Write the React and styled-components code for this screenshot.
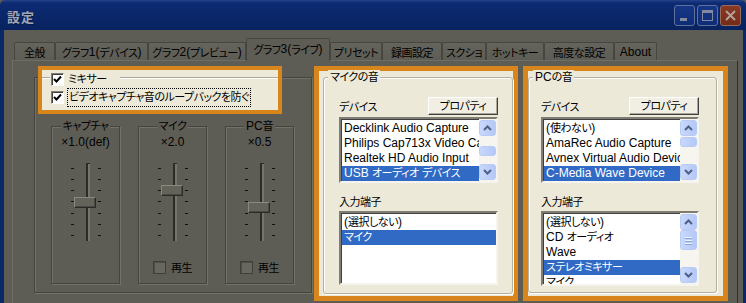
import styled, { createGlobalStyle } from "styled-components";

const GlobalStyle = createGlobalStyle`
  html, body {
    margin: 0;
    background: #5e5d55;
  }
  body {
    font-family: "Liberation Sans", "Noto Sans CJK JP", sans-serif;
    font-size: 12px;
    font-feature-settings: "palt";
    color: #000;
  }
`;

// Japanese runs are narrower in the original UI font
const Ja = styled.span`
  font-size: 11px;
  letter-spacing: -0.5px;
`;

const T = ({ children }) =>
  children
    .split(/([\u3000-\u30ff\u3400-\u9fff\uff00-\uffef]+)/)
    .map((part, i) => (i % 2 ? <Ja key={i}>{part}</Ja> : part));

const Window = styled.div`
  width: 746px;
  height: 303px;
  overflow: hidden;
  display: flex;
  flex-direction: column;
`;

const TitleBar = styled.div`
  height: 30px;
  flex: none;
  display: flex;
  align-items: flex-start;
  justify-content: space-between;
  padding: 0 5px 0 7px;
  box-sizing: border-box;
  border-radius: 5px 5px 0 0;
  background: linear-gradient(#23428a 0, #0d2b72 3px, #0a276b 50%, #08235f 100%);
`;

const TitleText = styled.div`
  margin-top: 7px;
  font-size: 13px;
  font-weight: bold;
  letter-spacing: 1px;
  color: #a3a7b3;
  text-shadow: 1px 1px 0 #061a4a;
`;

const CaptionButtons = styled.div`
  display: flex;
  gap: 2px;
  margin-top: 5px;
`;

const CaptionButton = styled.div`
  width: 21px;
  height: 21px;
  box-sizing: border-box;
  border: 1px solid ${(p) => (p.$close ? "#9a6a5a" : "#60719d")};
  border-radius: 3px;
  background: ${(p) =>
    p.$close
      ? "linear-gradient(#873a24, #742c18)"
      : "linear-gradient(#163788, #0e2c76)"};
  display: flex;
  align-items: center;
  justify-content: center;
`;

const Body = styled.div`
  flex: 1;
  min-height: 0;
  display: flex;
  flex-direction: column;
  background: #5e5d55;
  border-left: 4px solid #0a2768;
  border-right: 3px solid #0a2768;
  padding: 8px 5px 0 8px;
`;

const TabRow = styled.div`
  display: flex;
  align-items: flex-end;
  height: 22px;
  padding-left: 2px;
  position: relative;
  z-index: 1;
  flex: none;
`;

const Tab = styled.div`
  width: ${(p) => p.$w}px;
  height: ${(p) => (p.$active ? 23 : 18)}px;
  margin-bottom: ${(p) => (p.$active ? -1 : 0)}px;
  box-sizing: border-box;
  border: 1px solid #46453f;
  border-bottom: none;
  border-radius: 2px 2px 0 0;
  background: ${(p) =>
    p.$active ? "#5e5d55" : "linear-gradient(#64635c, #5d5c55)"};
  display: flex;
  align-items: center;
  justify-content: center;
  padding-bottom: ${(p) => (p.$active ? 2 : 0)}px;
  white-space: nowrap;
  flex: none;
`;

const Panel = styled.div`
  height: 260px;
  flex: none;
  box-sizing: border-box;
  border: 1px solid;
  border-color: #6e6d66 #2f2e2b #2f2e2b #6e6d66;
  display: flex;
  align-items: flex-start;
  padding: 5px 0 0 21px;
`;

const MixerGroup = styled.div`
  position: relative;
  margin-top: 11px;
  width: 278px;
  height: 216px;
  flex: none;
  box-sizing: border-box;
  border: 1px solid #45443e;
  box-shadow: 1px 1px 0 #73726a, inset 1px 1px 0 #73726a;
  display: flex;
  gap: 18px;
  padding: 48px 0 0 16px;
`;

const SubGroup = styled.div`
  width: 69px;
  height: 158px;
  flex: none;
  box-sizing: border-box;
  border: 1px solid #45443e;
  box-shadow: 1px 1px 0 #73726a, inset 1px 1px 0 #73726a;
  display: flex;
  flex-direction: column;
  align-items: center;
`;

const SubLegend = styled.div`
  margin-top: -7px;
  line-height: 13px;
  padding: 0 2px;
  background: #5e5d55;
`;

const SubValue = styled.div`
  margin-top: 2px;
  line-height: 14px;
`;

const Slider = styled.div`
  position: relative;
  margin-top: 14px;
  height: 78px;
  width: 30px;
  display: flex;
  justify-content: space-between;
`;

const TickCol = styled.div`
  margin-top: 5px;
  height: 68px;
  width: 4px;
  display: flex;
  flex-direction: column;
  justify-content: space-between;
  align-items: ${(p) => (p.$right ? "flex-end" : "flex-start")};
`;

const Tick = styled.div`
  width: 3px;
  height: 1px;
  background: #111;
`;

const Track = styled.div`
  width: 4px;
  height: 78px;
  margin-left: 4px;
  box-sizing: border-box;
  border-left: 2px solid #2c2b27;
  border-top: 1px solid #2c2b27;
  background: #76756d;
`;

const Thumb = styled.div`
  position: absolute;
  left: 3px;
  width: 22px;
  height: 11px;
  box-sizing: border-box;
  background: #646359;
  border: 1px solid;
  border-color: #8a897f #2b2a26 #2b2a26 #8a897f;
  box-shadow: inset -1px -1px 0 #4a4943;
`;

const PlayRow = styled.div`
  margin-top: 18px;
  height: 16px;
  display: flex;
  align-items: center;
  gap: 5px;
`;

const DimCheck = styled.div`
  width: 13px;
  height: 13px;
  box-sizing: border-box;
  border: 1px solid #3f3e39;
  background: #67665f;
  box-shadow: inset 1px 1px 0 #4e4d47;
`;

const Highlight = styled.div`
  position: absolute;
  left: 3px;
  top: -12px;
  width: 244px;
  height: 48px;
  box-sizing: border-box;
  border: 4px solid #d8861b;
  background: #ece9d8;
  padding-top: 3px;
`;

const HLRow = styled.div`
  display: flex;
  align-items: center;
  height: 13px;
  margin-top: ${(p) => (p.$second ? 5 : 0)}px;
  padding-left: ${(p) => (p.$second ? 9 : 0)}px;
`;

const GroupLine = styled.div`
  align-self: flex-start;
  margin-top: 4px;
  width: ${(p) => (p.$w ? `${p.$w}px` : "auto")};
  flex: ${(p) => (p.$w ? "none" : 1)};
  height: 0;
  border-top: 1px solid #aca899;
  border-bottom: 1px solid #fff;
`;

const CheckBox = styled.div`
  width: 13px;
  height: 13px;
  flex: none;
  box-sizing: border-box;
  margin-left: ${(p) => p.$ml || 0}px;
  border: 1px solid;
  border-color: #7f7d73 #fff #fff #7f7d73;
  box-shadow: inset 1px 1px 0 #404040;
  background: #fff;
  display: flex;
  align-items: center;
  justify-content: center;
`;

const CheckLabel = styled.div`
  width: 52px;
  padding-left: 4px;
  line-height: 13px;
  white-space: nowrap;
`;

const FocusLabel = styled.div`
  margin-left: 3px;
  border: 1px dotted #000;
  padding: 1px 1px;
  line-height: 15px;
  white-space: nowrap;
`;

const AudioPanel = styled.div`
  width: ${(p) => p.$w}px;
  height: 235px;
  margin-left: ${(p) => p.$ml}px;
  flex: none;
  box-sizing: border-box;
  border: 5px solid #d8861b;
  background: #ece9d8;
  padding: 6px 0 0 ${(p) => p.$pl}px;
`;

const AudioGroup = styled.div`
  width: ${(p) => p.$w}px;
  height: ${(p) => p.$h}px;
  box-sizing: border-box;
  border: 1px solid #b3b0a2;
  border-radius: 3px;
  box-shadow: inset 1px 1px 0 #fff, 1px 1px 0 #fff;
  display: flex;
  flex-direction: column;
`;

const Legend = styled.div`
  align-self: flex-start;
  margin: -8px 0 0 4px;
  padding: 0 2px;
  line-height: 14px;
  background: #ece9d8;
`;

const GroupContent = styled.div`
  display: flex;
  flex-direction: column;
  padding: 0 ${(p) => p.$pr}px 0 ${(p) => p.$pl}px;
`;

const DeviceRow = styled.div`
  margin-top: 13px;
  height: 18px;
  display: flex;
  align-items: center;
  justify-content: space-between;
`;

const PropButton = styled.div`
  width: 70px;
  height: 18px;
  box-sizing: border-box;
  border: 1px solid;
  border-color: #fff #404040 #404040 #fff;
  box-shadow: inset -1px -1px 0 #aca899;
  background: #f1efe4;
  display: flex;
  align-items: center;
  justify-content: center;
  line-height: 1;
`;

const FieldLabel = styled.div`
  margin-top: 11px;
  line-height: 16px;
`;

const ListBox = styled.div`
  margin-top: ${(p) => p.$mt}px;
  height: ${(p) => p.$h}px;
  box-sizing: border-box;
  border: 2px solid;
  border-color: #7f7d73 #f5f4ee #f5f4ee #7f7d73;
  box-shadow: inset 1px 1px 0 #404040;
  background: #fff;
  display: flex;
  overflow: hidden;
`;

const Items = styled.div`
  flex: 1;
  min-width: 0;
  padding: 2px 0 0 1px;
  overflow: hidden;
`;

const Item = styled.div`
  height: 15px;
  line-height: 15px;
  padding-left: 2px;
  white-space: nowrap;
  overflow: hidden;
  background: ${(p) => (p.$selected ? "#316ac5" : "transparent")};
  color: ${(p) => (p.$selected ? "#fff" : "#000")};
`;

const ScrollBar = styled.div`
  width: 17px;
  flex: none;
  display: flex;
  flex-direction: column;
  background: #f6f5f0;
  padding: 1px 0;
  box-sizing: border-box;
`;

const ScrollPart = styled.div`
  height: ${(p) => p.$h}px;
  flex: none;
  box-sizing: border-box;
  border: 1px solid #b8cbf7;
  border-radius: 3px;
  background: linear-gradient(90deg, #c9d8fc, #b4c8f6);
  display: flex;
  flex-direction: column;
  align-items: center;
  justify-content: center;
  gap: 2px;
`;

const ScrollTrack = styled.div`
  flex: 1;
  position: relative;
`;

const ScrollThumb = styled(ScrollPart)`
  position: absolute;
  left: 0;
  right: 0;
`;

const Grip = styled.div`
  width: 7px;
  height: 1px;
  background: #eef3ff;
  box-shadow: 0 1px 0 #8ca3d8;
`;

const Check = () => (
  <svg width="9" height="9" viewBox="0 0 9 9">
    <polyline points="1,4 3.5,6.5 8,1.5" fill="none" stroke="#000" strokeWidth="2" />
  </svg>
);

const Arrow = ({ down }) => (
  <svg width="11" height="8" viewBox="0 0 11 8">
    <polyline
      points={down ? "2,2 5.5,5.5 9,2" : "2,6 5.5,2.5 9,6"}
      fill="none"
      stroke="#4d6185"
      strokeWidth="2"
    />
  </svg>
);

const tabs = [
  ["全般", 41],
  ["グラフ 1(デバイス)", 93],
  ["グラフ 2(プレビュー)", 98],
  ["グラフ 3(ライブ)", 84, true],
  ["プリセット", 52],
  ["録画設定", 60],
  ["スクショ", 44],
  ["ホットキー", 58],
  ["高度な設定", 70],
  ["About", 43],
];

const channels = [
  { name: "キャプチャ", value: "×1.0(def)", pos: 34, play: false },
  { name: "マイク", value: "×2.0", pos: 22, play: true },
  { name: "PC音", value: "×0.5", pos: 39, play: true },
];

const ticks = [0, 1, 2, 3, 4, 5, 6];

function Scroll({ thumbTop, thumbH }) {
  return (
    <ScrollBar>
      <ScrollPart $h={16}>
        <Arrow />
      </ScrollPart>
      <ScrollTrack>
        <ScrollThumb $h={thumbH} style={{ top: thumbTop }}>
          {thumbH > 15 && (
            <>
              <Grip />
              <Grip />
              <Grip />
            </>
          )}
        </ScrollThumb>
      </ScrollTrack>
      <ScrollPart $h={16}>
        <Arrow down />
      </ScrollPart>
    </ScrollBar>
  );
}

function List({ items, selected, h, mt, scroll }) {
  return (
    <ListBox $h={h} $mt={mt}>
      <Items>
        {items.map((it, i) => (
          <Item key={i} $selected={i === selected}>
            <T>{it}</T>
          </Item>
        ))}
      </Items>
      {scroll && <Scroll {...scroll} />}
    </ListBox>
  );
}

function SoundPanel({ title, w, ml, pl, gw, gh, pad, devices, devSel, devScroll, inputs, inSel, inH, inScroll }) {
  return (
    <AudioPanel $w={w} $ml={ml} $pl={pl}>
      <AudioGroup $w={gw} $h={gh}>
        <Legend>
          <T>{title}</T>
        </Legend>
        <GroupContent $pl={pad[0]} $pr={pad[1]}>
          <DeviceRow>
            <span>
              <T>デバイス</T>
            </span>
            <PropButton>
              <T>プロパティ</T>
            </PropButton>
          </DeviceRow>
          <List items={devices} selected={devSel} h={66} mt={2} scroll={devScroll} />
          <FieldLabel>
            <T>入力端子</T>
          </FieldLabel>
          <List items={inputs} selected={inSel} h={inH} mt={1} scroll={inScroll} />
        </GroupContent>
      </AudioGroup>
    </AudioPanel>
  );
}

export default function App() {
  return (
    <>
      <GlobalStyle />
      <Window>
        <TitleBar>
          <TitleText>設定</TitleText>
          <CaptionButtons>
            <CaptionButton>
              <svg width="19" height="19" viewBox="0 0 19 19">
                <rect x="5" y="12" width="7" height="3" fill="#838aa0" />
              </svg>
            </CaptionButton>
            <CaptionButton>
              <svg width="19" height="19" viewBox="0 0 19 19">
                <rect x="4.5" y="4.5" width="10" height="10" fill="none" stroke="#838aa0" />
                <rect x="4" y="4" width="11" height="3" fill="#838aa0" />
              </svg>
            </CaptionButton>
            <CaptionButton $close>
              <svg width="19" height="19" viewBox="0 0 19 19">
                <path d="M5 5 L14 14 M14 5 L5 14" stroke="#b3a29c" strokeWidth="2" />
              </svg>
            </CaptionButton>
          </CaptionButtons>
        </TitleBar>
        <Body>
          <TabRow>
            {tabs.map(([label, w, active]) => (
              <Tab key={label} $w={w} $active={active}>
                <T>{label}</T>
              </Tab>
            ))}
          </TabRow>
          <Panel>
            <MixerGroup>
              <Highlight>
                <HLRow>
                  <GroupLine $w={8} />
                  <CheckBox $ml={1}>
                    <Check />
                  </CheckBox>
                  <CheckLabel>
                    <T>ミキサー</T>
                  </CheckLabel>
                  <GroupLine />
                </HLRow>
                <HLRow $second>
                  <CheckBox>
                    <Check />
                  </CheckBox>
                  <FocusLabel>
                    <T>ビデオキャプチャ音のループバックを防ぐ</T>
                  </FocusLabel>
                </HLRow>
              </Highlight>
              {channels.map((ch) => (
                <SubGroup key={ch.name}>
                  <SubLegend>
                    <T>{ch.name}</T>
                  </SubLegend>
                  <SubValue>{ch.value}</SubValue>
                  <Slider>
                    <TickCol>
                      {ticks.map((t) => (
                        <Tick key={t} />
                      ))}
                    </TickCol>
                    <Track />
                    <TickCol $right>
                      {ticks.map((t) => (
                        <Tick key={t} />
                      ))}
                    </TickCol>
                    <Thumb style={{ top: ch.pos }} />
                  </Slider>
                  {ch.play && (
                    <PlayRow>
                      <DimCheck />
                      <span>
                        <T>再生</T>
                      </span>
                    </PlayRow>
                  )}
                </SubGroup>
              ))}
            </MixerGroup>
            <SoundPanel
              title="マイクの音"
              w={204}
              ml={2}
              pl={4}
              gw={190}
              gh={217}
              pad={[15, 14]}
              devices={[
                "Decklink Audio Capture",
                "Philips Cap713x Video Capture",
                "Realtek HD Audio Input",
                "USB オーディオ デバイス",
              ]}
              devSel={3}
              devScroll={{ thumbTop: 10, thumbH: 10 }}
              inputs={["(選択しない)", "マイク"]}
              inSel={1}
              inH={74}
            />
            <SoundPanel
              title="PCの音"
              w={205}
              ml={5}
              pl={0}
              gw={189}
              gh={216}
              pad={[12, 17]}
              devices={[
                "(使わない)",
                "AmaRec Audio Capture",
                "Avnex Virtual Audio Device",
                "C-Media Wave Device",
              ]}
              devSel={3}
              devScroll={{ thumbTop: 1, thumbH: 10 }}
              inputs={["(選択しない)", "CD オーディオ", "Wave", "ステレオミキサー", "マイク"]}
              inSel={3}
              inH={75}
              inScroll={{ thumbTop: 0, thumbH: 20 }}
            />
          </Panel>
        </Body>
      </Window>
    </>
  );
}
